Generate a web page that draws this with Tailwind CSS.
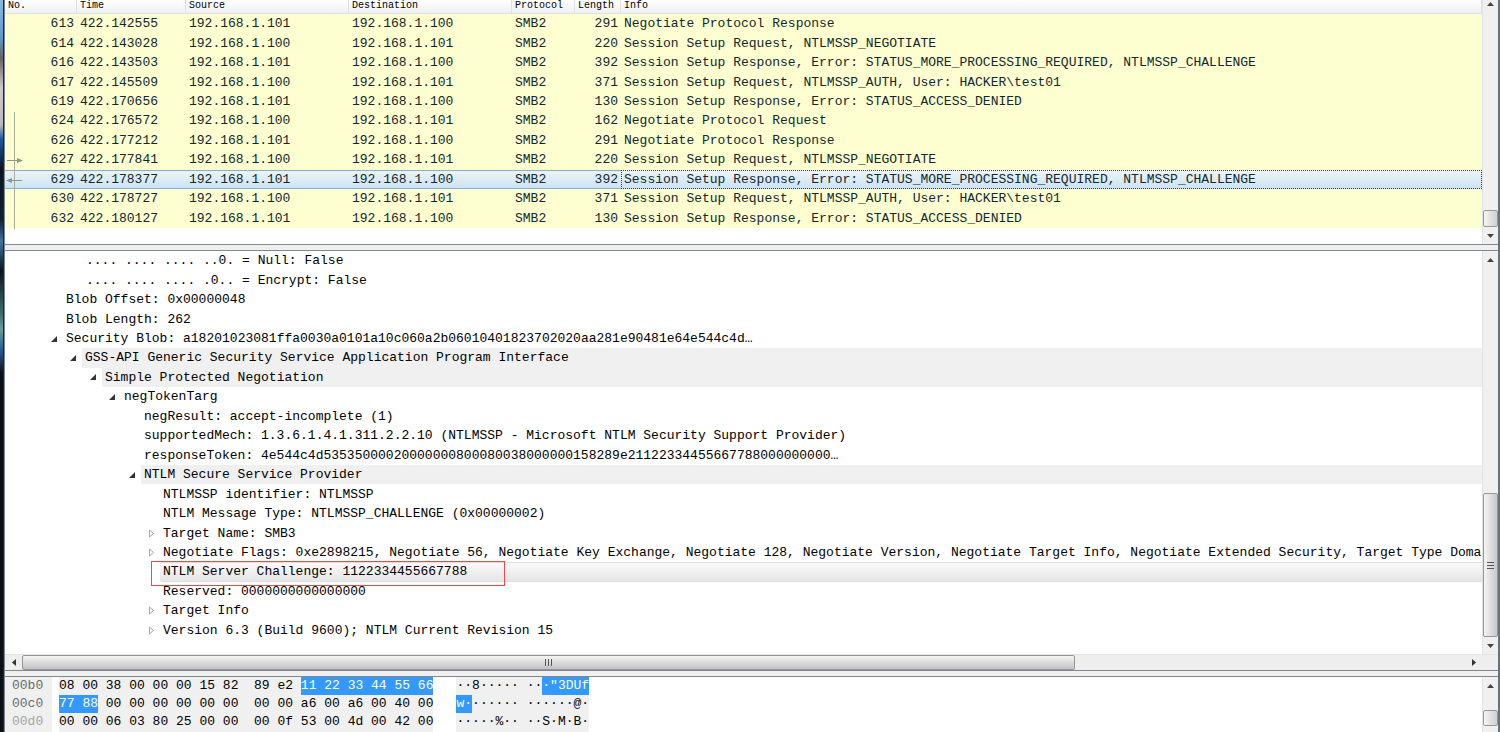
<!DOCTYPE html>
<html lang="en">
<head>
  <meta charset="UTF-8">
  <meta name="viewport" content="width=device-width, initial-scale=1.0">
  <title>Packet Capture</title>
  <script src="https://cdn.jsdelivr.net/npm/@tailwindcss/browser@4"></script>
</head>
<body class="flex h-screen overflow-hidden bg-[#f0f0f0] font-['Liberation_Mono',monospace] text-[13px] leading-[18px] text-[#12272e]">

<!-- desktop showing at the window edge -->
<div class="w-[3px] shrink-0 bg-[linear-gradient(#8bb8e0,#5f9ad0_5%,#666_8%,#ccc_12%,#bbb_17%,#1d5a9c_19%,#0a1520_23%,#102030_30%,#3f75a0_33%,#08131d_37%,#3d7272_43%,#6a9c9c_45%,#28588c_48%,#0b1017_51%,#0b1017)]"></div>
<div class="w-0.5 shrink-0 border-l border-[#20262c] bg-[#7d858e]"></div>

<main class="flex min-w-0 flex-1 flex-col border-r-2 border-[#66727e]">

  <!-- packet list -->
  <section class="flex shrink-0 border-b border-[#828790] bg-white">
    <div class="relative min-w-0 flex-1 pb-4">
      <table class="h-[228px] w-full table-fixed border-separate border-spacing-0 whitespace-pre bg-[#fdffd0] [&_td]:border-y [&_td]:border-transparent [&_td]:px-[3px] [&_td]:pt-px [&_td]:pb-0 [&_td]:leading-4">
        <colgroup>
          <col class="w-[72px]"><col class="w-[109px]"><col class="w-[163px]"><col class="w-[163px]"><col class="w-[63px]"><col class="w-[46px]"><col>
        </colgroup>
        <thead>
          <tr class="h-3.5 bg-linear-to-b from-white to-[#eeeff2] text-left text-[10px] leading-[11px] text-black [&>th]:h-3.5 [&>th]:border-r [&>th]:border-b [&>th]:border-[#dfe1e5] [&>th]:px-[3px] [&>th]:pt-0 [&>th]:align-top [&>th]:font-normal">
            <th>No.</th><th>Time</th><th>Source</th><th>Destination</th><th>Protocol</th><th>Length</th><th>Info</th>
          </tr>
        </thead>
        <tbody>
          <tr><td class="text-right">613</td><td>422.142555</td><td>192.168.1.101</td><td>192.168.1.100</td><td>SMB2</td><td class="text-right">291</td><td>Negotiate Protocol Response</td></tr>
          <tr><td class="text-right">614</td><td>422.143028</td><td>192.168.1.100</td><td>192.168.1.101</td><td>SMB2</td><td class="text-right">220</td><td>Session Setup Request, NTLMSSP_NEGOTIATE</td></tr>
          <tr><td class="text-right">616</td><td>422.143503</td><td>192.168.1.101</td><td>192.168.1.100</td><td>SMB2</td><td class="text-right">392</td><td>Session Setup Response, Error: STATUS_MORE_PROCESSING_REQUIRED, NTLMSSP_CHALLENGE</td></tr>
          <tr><td class="text-right">617</td><td>422.145509</td><td>192.168.1.100</td><td>192.168.1.101</td><td>SMB2</td><td class="text-right">371</td><td>Session Setup Request, NTLMSSP_AUTH, User: HACKER\test01</td></tr>
          <tr><td class="text-right">619</td><td>422.170656</td><td>192.168.1.101</td><td>192.168.1.100</td><td>SMB2</td><td class="text-right">130</td><td>Session Setup Response, Error: STATUS_ACCESS_DENIED</td></tr>
          <tr><td class="text-right">624</td><td>422.176572</td><td>192.168.1.100</td><td>192.168.1.101</td><td>SMB2</td><td class="text-right">162</td><td>Negotiate Protocol Request</td></tr>
          <tr><td class="text-right">626</td><td>422.177212</td><td>192.168.1.101</td><td>192.168.1.100</td><td>SMB2</td><td class="text-right">291</td><td>Negotiate Protocol Response</td></tr>
          <tr><td class="text-right">627</td><td>422.177841</td><td>192.168.1.100</td><td>192.168.1.101</td><td>SMB2</td><td class="text-right">220</td><td>Session Setup Request, NTLMSSP_NEGOTIATE</td></tr>
          <tr class="bg-linear-to-b from-[#eef5f6] to-[#cbe2f3] [&>td:last-child]:border-x [&>td:last-child]:border-dotted [&>td:last-child]:border-[#1d3c66] [&>td:last-child]:pl-0.5 [&>td:not(:last-child)]:border-[#84acdd]"><td class="text-right">629</td><td>422.178377</td><td>192.168.1.101</td><td>192.168.1.100</td><td>SMB2</td><td class="text-right">392</td><td>Session Setup Response, Error: STATUS_MORE_PROCESSING_REQUIRED, NTLMSSP_CHALLENGE</td></tr>
          <tr><td class="text-right">630</td><td>422.178727</td><td>192.168.1.100</td><td>192.168.1.101</td><td>SMB2</td><td class="text-right">371</td><td>Session Setup Request, NTLMSSP_AUTH, User: HACKER\test01</td></tr>
          <tr><td class="text-right">632</td><td>422.180127</td><td>192.168.1.101</td><td>192.168.1.100</td><td>SMB2</td><td class="text-right">130</td><td>Session Setup Response, Error: STATUS_ACCESS_DENIED</td></tr>
        </tbody>
      </table>
      <!-- conversation markers -->
      <svg class="absolute top-28 left-0" width="20" height="117" viewBox="0 0 20 117" fill="#8a9690" stroke="#8a9690">
        <path d="M9.5 0V117" stroke="#a9ae9d"/>
        <path d="M2 48.500H13M6 68.500H17" fill="none"/>
        <path d="M12 46L18 48.500L12 51ZM7 66L1 68.500L7 71Z" stroke="none"/>
      </svg>
    </div>
    <div class="flex w-4 shrink-0 flex-col border-l border-[#e3e3e3] bg-[#f0f0f0]">
      <button aria-label="Scroll up" class="flex h-2 items-center justify-center"><svg width="7" height="4" viewBox="0 0 7 4" fill="#444"><path d="M3.500 0L7 4H0Z"/></svg></button>
      <div class="flex flex-1 flex-col justify-end"><div class="h-[17px] rounded-xs border border-[#979797] bg-linear-to-r from-[#f5f5f5] to-[#cfcfd2]"></div></div>
      <button aria-label="Scroll down" class="flex h-[17px] items-center justify-center"><svg width="7" height="4" viewBox="0 0 7 4" fill="#444"><path d="M3.500 4L7 0H0Z"/></svg></button>
    </div>
  </section>

  <div class="h-[5px] shrink-0"></div>

  <!-- packet details -->
  <section class="flex min-h-0 flex-1 flex-col border-y border-[#828790] bg-white">
    <div class="flex min-h-0 flex-1">
      <div class="min-w-0 flex-1 overflow-hidden text-black">
        <ul class="grid h-[389px] auto-rows-fr whitespace-pre [&>li]:flex [&>li]:items-center [&_button]:flex [&_button]:w-[17px] [&_button]:shrink-0 [&_span]:flex [&_span]:h-full [&_span]:flex-1 [&_span]:items-center [&_span]:pt-px [&_span]:pl-[3px]">
          <li class="pl-[78px]"><span>.... .... .... ..0. = Null: False</span></li>
          <li class="pl-[78px]"><span>.... .... .... .0.. = Encrypt: False</span></li>
          <li class="pl-[58px]"><span>Blob Offset: 0x00000048</span></li>
          <li class="pl-[58px]"><span>Blob Length: 262</span></li>
          <li class="pl-[41px]"><button aria-label="Collapse"><svg class="ml-1" width="8" height="8" viewBox="0 0 8 8" fill="#333"><path d="M7 1V7H1Z"/></svg></button><span>Security Blob: a18201023081ffa0030a0101a10c060a2b06010401823702020aa281e90481e64e544c4d…</span></li>
          <li class="pl-[60px]"><button aria-label="Collapse"><svg class="ml-1" width="8" height="8" viewBox="0 0 8 8" fill="#333"><path d="M7 1V7H1Z"/></svg></button><span class="bg-[#f0f0f0]">GSS-API Generic Security Service Application Program Interface</span></li>
          <li class="pl-[80px]"><button aria-label="Collapse"><svg class="ml-1" width="8" height="8" viewBox="0 0 8 8" fill="#333"><path d="M7 1V7H1Z"/></svg></button><span class="bg-[#f0f0f0]">Simple Protected Negotiation</span></li>
          <li class="pl-[99px]"><button aria-label="Collapse"><svg class="ml-1" width="8" height="8" viewBox="0 0 8 8" fill="#333"><path d="M7 1V7H1Z"/></svg></button><span>negTokenTarg</span></li>
          <li class="pl-[136px]"><span>negResult: accept-incomplete (1)</span></li>
          <li class="pl-[136px]"><span>supportedMech: 1.3.6.1.4.1.311.2.2.10 (NTLMSSP - Microsoft NTLM Security Support Provider)</span></li>
          <li class="pl-[136px]"><span>responseToken: 4e544c4d53535000020000000800080038000000158289e21122334455667788000000000…</span></li>
          <li class="pl-[119px]"><button aria-label="Collapse"><svg class="ml-1" width="8" height="8" viewBox="0 0 8 8" fill="#333"><path d="M7 1V7H1Z"/></svg></button><span class="bg-[#f0f0f0]">NTLM Secure Service Provider</span></li>
          <li class="pl-[155px]"><span>NTLMSSP identifier: NTLMSSP</span></li>
          <li class="pl-[155px]"><span>NTLM Message Type: NTLMSSP_CHALLENGE (0x00000002)</span></li>
          <li class="pl-[138px]"><button aria-label="Expand"><svg class="ml-1" width="8" height="9" viewBox="0 0 8 9" fill="white" stroke="#a6a6a6"><path d="M2.500 1V8L6.500 4.500Z"/></svg></button><span>Target Name: SMB3</span></li>
          <li class="pl-[138px]"><button aria-label="Expand"><svg class="ml-1" width="8" height="9" viewBox="0 0 8 9" fill="white" stroke="#a6a6a6"><path d="M2.500 1V8L6.500 4.500Z"/></svg></button><span>Negotiate Flags: 0xe2898215, Negotiate 56, Negotiate Key Exchange, Negotiate 128, Negotiate Version, Negotiate Target Info, Negotiate Extended Security, Target Type Domain</span></li>
          <li class="relative z-10 pl-[155px]"><span class="rounded-l-xs border-y border-[#dedede] bg-linear-to-b from-[#fafafa] to-[#e5e5e5]">NTLM Server Challenge: 1122334455667788</span><div class="absolute -top-px left-[146px] z-10 h-[25px] w-[354px] border border-[#f04848]"></div></li>
          <li class="pl-[155px]"><span>Reserved: 0000000000000000</span></li>
          <li class="pl-[138px]"><button aria-label="Expand"><svg class="ml-1" width="8" height="9" viewBox="0 0 8 9" fill="white" stroke="#a6a6a6"><path d="M2.500 1V8L6.500 4.500Z"/></svg></button><span>Target Info</span></li>
          <li class="pl-[138px]"><button aria-label="Expand"><svg class="ml-1" width="8" height="9" viewBox="0 0 8 9" fill="white" stroke="#a6a6a6"><path d="M2.500 1V8L6.500 4.500Z"/></svg></button><span>Version 6.3 (Build 9600); NTLM Current Revision 15</span></li>
        </ul>
      </div>
      <div class="flex w-4 shrink-0 flex-col border-l border-[#e3e3e3] bg-[#f0f0f0]">
        <button aria-label="Scroll up" class="flex h-[17px] items-center justify-center"><svg width="7" height="4" viewBox="0 0 7 4" fill="#444"><path d="M3.500 0L7 4H0Z"/></svg></button>
        <div class="flex flex-1 flex-col justify-end">
          <div class="flex h-[144px] flex-col items-center justify-center gap-0.5 rounded-xs border border-[#979797] bg-linear-to-r from-[#f5f5f5] to-[#c8c8cc]">
            <i class="h-px w-[7px] bg-[#555]"></i><i class="h-px w-[7px] bg-[#555]"></i><i class="h-px w-[7px] bg-[#555]"></i>
          </div>
        </div>
        <button aria-label="Scroll down" class="flex h-[17px] items-center justify-center"><svg width="7" height="4" viewBox="0 0 7 4" fill="#444"><path d="M3.500 4L7 0H0Z"/></svg></button>
      </div>
    </div>
    <div class="flex h-4 shrink-0 border-t border-[#e3e3e3] bg-[#eee] pr-4">
      <button aria-label="Scroll left" class="flex w-[17px] items-center justify-center"><svg width="4" height="7" viewBox="0 0 4 7" fill="#333"><path d="M0 3.500L4 0V7Z"/></svg></button>
      <div class="flex flex-1">
        <div class="flex w-[73%] items-center justify-center gap-0.5 rounded-xs border border-[#979797] bg-linear-to-b from-[#f5f5f5] to-[#c2c2c5]">
          <i class="h-[7px] w-px bg-[#555]"></i><i class="h-[7px] w-px bg-[#555]"></i><i class="h-[7px] w-px bg-[#555]"></i>
        </div>
      </div>
      <button aria-label="Scroll right" class="flex w-[17px] items-center justify-center"><svg width="4" height="7" viewBox="0 0 4 7" fill="#333"><path d="M4 3.500L0 0V7Z"/></svg></button>
    </div>
  </section>

  <div class="h-[5px] shrink-0"></div>

  <!-- packet bytes -->
  <section class="flex h-14 shrink-0 overflow-hidden border-t border-[#828790] bg-white">
    <div class="flex flex-1 text-black [&_mark]:inline-block [&_mark]:bg-[#3399ff] [&_mark]:text-white [&_p]:h-[18px] [&_p]:whitespace-pre">
      <div class="w-[47px] bg-[#f0f0f0] pl-[7px] text-[#6c6c6c]"><p>00b0</p><p>00c0</p><p class="text-[#a4a4a4]">00d0</p></div>
      <div class="ml-[7px] bg-[#f0f0f0]">
        <p>08 00 38 00 00 00 15 82  89 e2 <mark>11 22 33 44 55 66</mark></p>
        <p><mark>77 88</mark> 00 00 00 00 00 00  00 00 a6 00 a6 00 40 00</p>
        <p>00 00 06 03 80 25 00 00  00 0f 53 00 4d 00 42 00</p>
      </div>
      <div class="ml-[23px] bg-[#f0f0f0]">
        <p>··8····· ··<mark>·"3DUf</mark></p>
        <p><mark>w·</mark>······ ······@·</p>
        <p>·····%·· ··S·M·B·</p>
      </div>
    </div>
    <div class="flex w-4 shrink-0 flex-col border-l border-[#e3e3e3] bg-[#f0f0f0]">
      <button aria-label="Scroll up" class="flex h-[17px] items-center justify-center"><svg width="7" height="4" viewBox="0 0 7 4" fill="#444"><path d="M3.500 0L7 4H0Z"/></svg></button>
      <div class="mt-4 h-4 rounded-xs border border-[#979797] bg-linear-to-r from-[#f5f5f5] to-[#cfcfd2]"></div>
    </div>
  </section>
</main>

</body>
</html>
